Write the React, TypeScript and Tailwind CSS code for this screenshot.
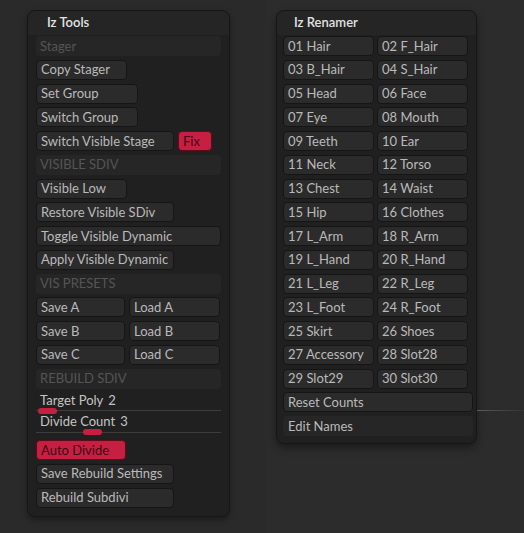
const btn =
  'h-[20px] flex items-center px-[4px] rounded-[4px] border border-[#151515] bg-[#2b2b2b] text-[#bababa] text-[13px] leading-none whitespace-nowrap';
const red =
  'h-[20px] flex items-center px-[4px] rounded-[4px] border border-[#5e0c1c] bg-[#c71f42] text-[#3d0710] text-[13px] leading-none whitespace-nowrap';
const label =
  'h-[20px] flex items-center px-[4px] rounded-[4px] bg-[#262626] text-[#555555] text-[13px] leading-none';

const renamer = [
  '01 Hair', '02 F_Hair', '03 B_Hair', '04 S_Hair', '05 Head', '06 Face',
  '07 Eye', '08 Mouth', '09 Teeth', '10 Ear', '11 Neck', '12 Torso',
  '13 Chest', '14 Waist', '15 Hip', '16 Clothes', '17 L_Arm', '18 R_Arm',
  '19 L_Hand', '20 R_Hand', '21 L_Leg', '22 R_Leg', '23 L_Foot', '24 R_Foot',
  '25 Skirt', '26 Shoes', '27 Accessory', '28 Slot28', '29 Slot29', '30 Slot30',
];

function Slider({ name, value, thumb, gap }: { name: string; value: string; thumb: number; gap: string }) {
  return (
    <div className="h-[22px] flex flex-col">
      <div className={`${gap} flex items-end px-[4px] text-[13px] leading-none text-[#c4c4c4]`}>
        {name}
        <span className="ml-[5px]">{value}</span>
      </div>
      <div className="relative flex-1 flex items-center">
        <div className="w-full h-px bg-[#3c3c3c]" />
        <div
          className="absolute top-1/2 -translate-y-1/2 h-[6px] w-[19px] rounded-full bg-[#c71f42]"
          style={{ left: thumb }}
        />
      </div>
    </div>
  );
}

export default function App() {
  return (
    <div className="w-[524px] h-[533px] flex font-['Lato',sans-serif] overflow-hidden">
      <div className="w-[266px] h-full bg-[#2a2a2a] pl-[27px] pt-[10px]">
        <div className="w-[203px] rounded-[8px] border border-[#161616] bg-[#202020] shadow-[0_3px_6px_rgba(0,0,0,0.35)] overflow-hidden">
          <div className="h-[24px] flex items-center pl-[19px] bg-[#252525] text-[13px] text-[#e2e2e2] font-semibold">
            Iz Tools
          </div>
          <div className="flex flex-col gap-[3.75px] px-[8px] pt-[1px] pb-[8px]">
            <div className={label}>Stager</div>
            <div className={`${btn} w-[91px]`}>Copy Stager</div>
            <div className={`${btn} w-[102px]`}>Set Group</div>
            <div className={`${btn} w-[102px]`}>Switch Group</div>
            <div className="flex gap-[4px]">
              <div className={`${btn} w-[138px]`}>Switch Visible Stage</div>
              <div className={`${red} w-[34px]`}>Fix</div>
            </div>
            <div className={label}>VISIBLE SDIV</div>
            <div className={`${btn} w-[91px]`}>Visible Low</div>
            <div className={`${btn} w-[138px]`}>Restore Visible SDiv</div>
            <div className={`${btn} w-[185px]`}>Toggle Visible Dynamic</div>
            <div className={`${btn} w-[138px]`}>Apply Visible Dynamic</div>
            <div className={label}>VIS PRESETS</div>
            {['A', 'B', 'C'].map((k) => (
              <div key={k} className="grid grid-cols-[89px_91px] gap-[4px]">
                <div className={btn}>Save {k}</div>
                <div className={btn}>Load {k}</div>
              </div>
            ))}
            <div className={label}>REBUILD SDIV</div>
            <div className="flex flex-col">
              <Slider name="Target Poly" value="2" thumb={2} gap="h-[15px]" />
              <Slider name="Divide Count" value="3" thumb={47} gap="h-[14px]" />
            </div>
            <div className={`${red} w-[90px]`}>Auto Divide</div>
            <div className={`${btn} w-[138px]`}>Save Rebuild Settings</div>
            <div className={`${btn} w-[138px]`}>Rebuild Subdivi</div>
          </div>
        </div>
      </div>
      <div className="flex-1 h-full bg-[#2c2c2c] pl-[10px] pt-[10px] relative">
        <div className="w-[201px] rounded-[8px] border border-[#161616] bg-[#202020] shadow-[0_4px_8px_rgba(0,0,0,0.4)] overflow-hidden">
          <div className="h-[24px] flex items-center pl-[17px] bg-[#252525] text-[13px] text-[#e2e2e2] font-semibold">
            Iz Renamer
          </div>
          <div className="flex flex-col gap-[3.75px] pl-[6px] pr-[3px] pt-[1px] pb-[7px]">
            <div className="grid grid-cols-[91px_91px] gap-x-[3px] gap-y-[3.75px]">
              {renamer.map((n) => (
                <div key={n} className={btn}>
                  {n}
                </div>
              ))}
            </div>
            <div className={btn}>Reset Counts</div>
            <div className={`${btn} border-transparent bg-[#262626]`}>Edit Names</div>
          </div>
        </div>
        <div className="absolute left-[211px] top-[410px] w-[47px] h-px bg-gradient-to-r from-[#5a5a5a] to-[#343434]" />
      </div>
    </div>
  );
}
